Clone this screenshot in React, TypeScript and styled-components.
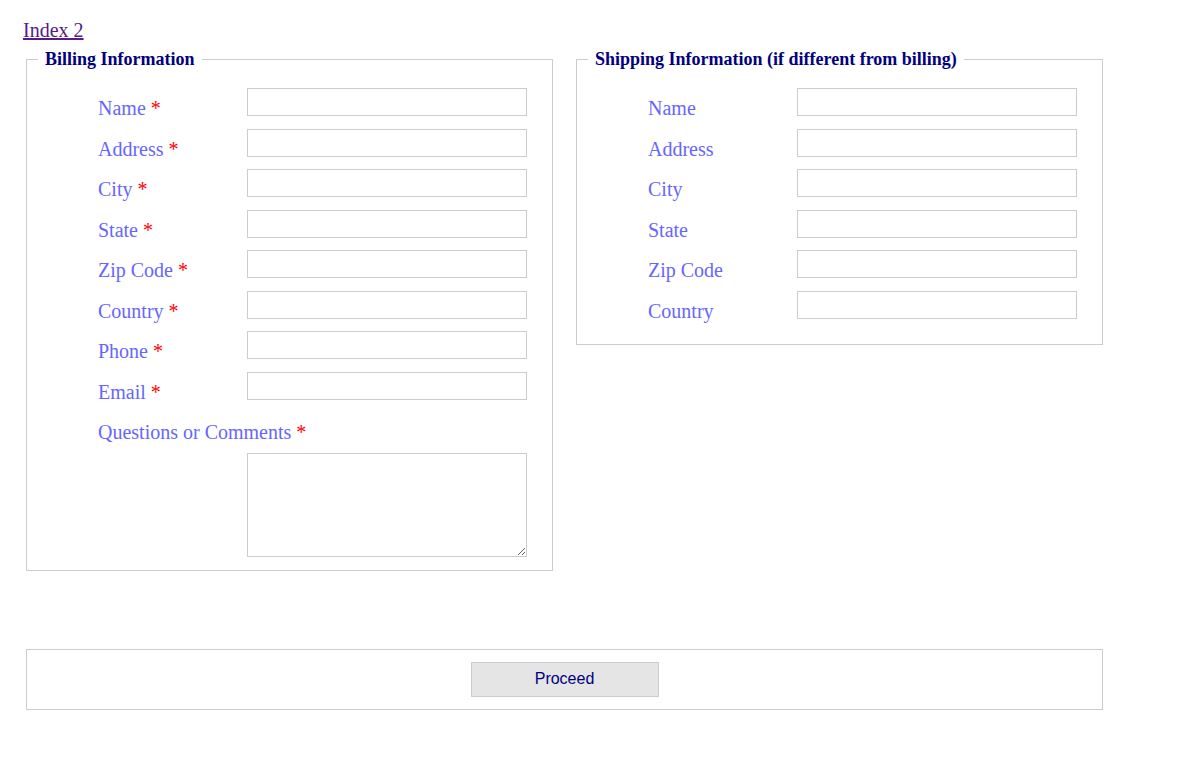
import React from "react";
import styled, {createGlobalStyle} from "styled-components";

const GlobalStyle = createGlobalStyle`
  body {
    margin: 0;
    background: #ffffff;
    font-family: "Liberation Serif", "Times New Roman", serif;
  }
`;

interface IField {
    label: string;
    required?: boolean;
}

const billingFields: IField[] = [
    {label: "Name", required: true},
    {label: "Address", required: true},
    {label: "City", required: true},
    {label: "State", required: true},
    {label: "Zip Code", required: true},
    {label: "Country", required: true},
    {label: "Phone", required: true},
    {label: "Email", required: true},
];

const shippingFields: IField[] = [
    {label: "Name"},
    {label: "Address"},
    {label: "City"},
    {label: "State"},
    {label: "Zip Code"},
    {label: "Country"},
];

const FieldRow = (props: IField) => {
    return (
        <>
            <Label>
                {props.label}
                {props.required && <Star> *</Star>}
            </Label>
            <TextInput type="text" name={props.label.toLowerCase()}/>
        </>
    );
};

const App = () => {
    return (
        <Page>
            <GlobalStyle/>
            <Heading>Billing and Shipping</Heading>
            <IndexLink href="#index2">Index 2</IndexLink>
            <Columns>
                <Section $padBottom={13}>
                    <Legend>Billing Information</Legend>
                    <Rows>
                        {billingFields.map((f) => (
                            <FieldRow key={f.label} {...f}/>
                        ))}
                        <WideLabel>
                            Questions or Comments<Star> *</Star>
                        </WideLabel>
                        <Comments name="comments"/>
                    </Rows>
                </Section>
                <Section $padBottom={25}>
                    <Legend>Shipping Information (if different from billing)</Legend>
                    <Rows>
                        {shippingFields.map((f) => (
                            <FieldRow key={f.label} {...f}/>
                        ))}
                    </Rows>
                </Section>
            </Columns>
            <ActionBar>
                <ProceedButton type="button">Proceed</ProceedButton>
            </ActionBar>
        </Page>
    );
};

const Page = styled.div`
  padding: 0 0 40px 24px;
`;

const Heading = styled.h2`
  margin: -27px 0 0 0;
  height: 28px;
  font-size: 24px;
  line-height: 28px;
  font-weight: bold;
  text-align: center;
  color: #000000;
`;

const IndexLink = styled.a`
  display: inline-block;
  margin: 18px 0 0 -1px;
  font-size: 20px;
  line-height: 23px;
  color: #551a8b;
  text-decoration: underline;
`;

const Columns = styled.div`
  display: flex;
  gap: 19px;
  align-items: flex-start;
  margin-top: 7px;
`;

const Section = styled.fieldset<{ $padBottom: number }>`
  box-sizing: border-box;
  width: 527px;
  margin: 0 2px;
  padding: 0 0 ${(p) => p.$padBottom}px 0;
  border: 1px solid #cccccc;
  min-width: 0;
`;

const Legend = styled.legend`
  margin-left: 11px;
  padding: 0 7px;
  font-size: 18px;
  line-height: 21px;
  font-weight: bold;
  color: #000080;
`;

const Rows = styled.div`
  display: grid;
  grid-template-columns: 149px 280px;
  row-gap: 12.5px;
  padding: 18px 0 0 71px;
`;

const Label = styled.label`
  display: block;
  box-sizing: border-box;
  height: 28px;
  padding-top: 9px;
  font-size: 20px;
  line-height: 23px;
  color: #6666ff;
  white-space: nowrap;
`;

const WideLabel = styled(Label)`
  grid-column: 1 / -1;
`;

const Star = styled.span`
  color: #ff0000;
`;

const TextInput = styled.input`
  box-sizing: border-box;
  width: 280px;
  height: 28px;
  margin: 0;
  border: 1px solid #cccccc;
  padding: 2px 4px;
  font-size: 16px;
  outline: none;
`;

const Comments = styled.textarea`
  grid-column: 2;
  box-sizing: border-box;
  width: 280px;
  height: 104px;
  margin: 0;
  border: 1px solid #cccccc;
  padding: 2px 4px;
  outline: none;
`;

const ActionBar = styled.fieldset`
  box-sizing: border-box;
  width: 1077px;
  margin: 78px 2px 0 2px;
  padding: 12px 0;
  border: 1px solid #cccccc;
  text-align: center;
`;

const ProceedButton = styled.button`
  box-sizing: border-box;
  width: 188px;
  height: 35px;
  background: #e5e5e5;
  border: 1px solid #cccccc;
  color: #000080;
  font-family: "Liberation Sans", Arial, sans-serif;
  font-size: 16px;
  cursor: pointer;
  vertical-align: top;
`;

export default App;
